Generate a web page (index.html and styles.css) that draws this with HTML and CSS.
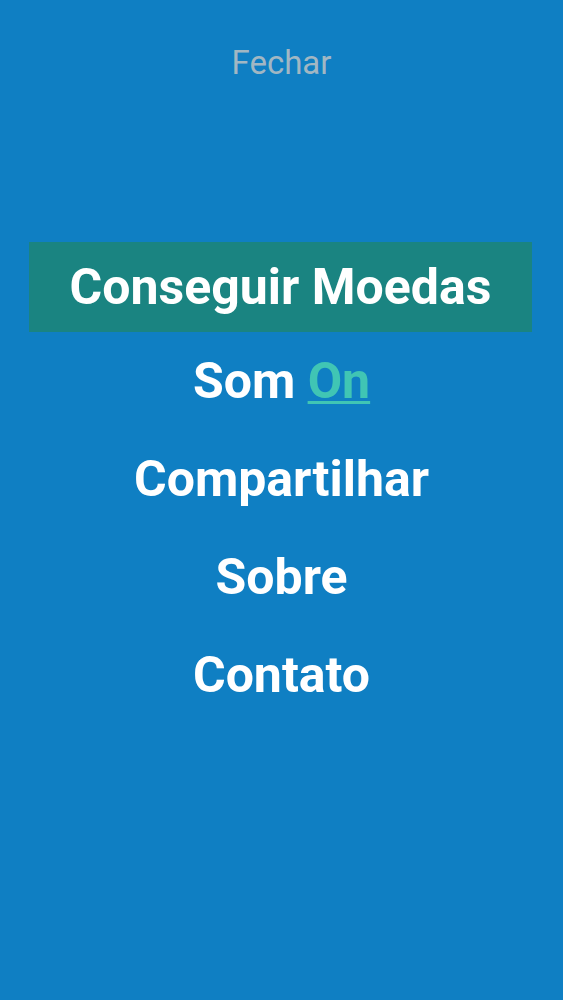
FILE: index.html
```html
<!DOCTYPE html>
<html lang="pt">
<head>
<meta charset="utf-8">
<title>Menu</title>
<link rel="stylesheet" href="styles.css">
</head>
<body>
<div class="screen">
  <header class="top">
    <a class="close">Fechar</a>
  </header>
  <nav class="menu">
    <a class="item item-highlight">Conseguir Moedas</a>
    <a class="item">Som <span class="toggle">On</span></a>
    <a class="item">Compartilhar</a>
    <a class="item">Sobre</a>
    <a class="item">Contato</a>
  </nav>
</div>
</body>
</html>
```
FILE: styles.css
```css
html, body {
  margin: 0;
  padding: 0;
}
body {
  background: #0f7fc3;
  font-family: Roboto, "Noto Sans", sans-serif;
}
.screen {
  width: 563px;
  height: 1000px;
  display: flex;
  flex-direction: column;
}
.top {
  height: 126px;
  display: flex;
  align-items: center;
  justify-content: center;
}
.close {
  color: #a1b7c3;
  font-size: 33px;
  font-weight: 400;
  line-height: 126px;
}
.menu {
  margin-top: 116px;
  display: flex;
  flex-direction: column;
  align-items: center;
}
.item {
  color: #ffffff;
  font-size: 50px;
  font-weight: 700;
  height: 98px;
  line-height: 99px;
  text-align: center;
  align-self: stretch;
}
.item-highlight {
  background: #1a8481;
  height: 90px;
  line-height: 91px;
  margin: 0 31px 0 29px;
}
.toggle {
  color: #40c5b4;
  text-decoration: underline;
  text-decoration-thickness: 3px;
  text-underline-offset: 3px;
}
```
